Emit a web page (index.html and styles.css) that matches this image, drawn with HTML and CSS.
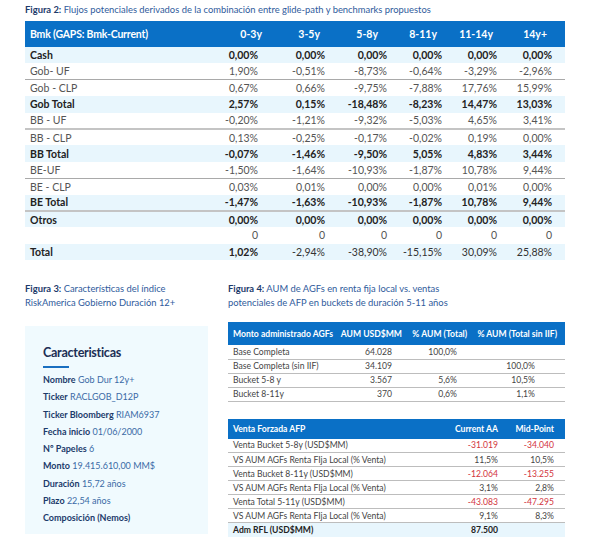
FILE: index.html
```html
<!DOCTYPE html>
<html lang="es">
<head>
<meta charset="utf-8">
<title>Figuras</title>
<link rel="stylesheet" href="styles.css">
</head>
<body>
<div class="page">
  <p class="caption fig2"><b>Figura 2:</b> Flujos potenciales derivados de la combinación entre glide-path y benchmarks propuestos</p>
  <table class="gaps">
    <colgroup>
      <col class="c-label"><col class="c1"><col class="c2"><col class="c3"><col class="c4"><col class="c5"><col class="c6">
    </colgroup>
    <thead>
      <tr><th>Bmk (GAPS: Bmk-Current)</th><th>0-3y</th><th>3-5y</th><th>5-8y</th><th>8-11y</th><th>11-14y</th><th>14y+</th></tr>
    </thead>
    <tbody>
      <tr class="hl bold"><td>Cash</td><td>0,00%</td><td>0,00%</td><td>0,00%</td><td>0,00%</td><td>0,00%</td><td>0,00%</td></tr>
      <tr class="line"><td>Gob- UF</td><td>1,90%</td><td>-0,51%</td><td>-8,73%</td><td>-0,64%</td><td>-3,29%</td><td>-2,96%</td></tr>
      <tr><td>Gob - CLP</td><td>0,67%</td><td>0,66%</td><td>-9,75%</td><td>-7,88%</td><td>17,76%</td><td>15,99%</td></tr>
      <tr class="hl bold"><td>Gob Total</td><td>2,57%</td><td>0,15%</td><td>-18,48%</td><td>-8,23%</td><td>14,47%</td><td>13,03%</td></tr>
      <tr class="thick"><td>BB - UF</td><td>-0,20%</td><td>-1,21%</td><td>-9,32%</td><td>-5,03%</td><td>4,65%</td><td>3,41%</td></tr>
      <tr><td>BB - CLP</td><td>0,13%</td><td>-0,25%</td><td>-0,17%</td><td>-0,02%</td><td>0,19%</td><td>0,00%</td></tr>
      <tr class="hl bold"><td>BB Total</td><td>-0,07%</td><td>-1,46%</td><td>-9,50%</td><td>5,05%</td><td>4,83%</td><td>3,44%</td></tr>
      <tr class="line"><td>BE-UF</td><td>-1,50%</td><td>-1,64%</td><td>-10,93%</td><td>-1,87%</td><td>10,78%</td><td>9,44%</td></tr>
      <tr><td>BE - CLP</td><td>0,03%</td><td>0,01%</td><td>0,00%</td><td>0,00%</td><td>0,01%</td><td>0,00%</td></tr>
      <tr class="hl bold thick"><td>BE Total</td><td>-1,47%</td><td>-1,63%</td><td>-10,93%</td><td>-1,87%</td><td>10,78%</td><td>9,44%</td></tr>
      <tr class="hl bold"><td>Otros</td><td>0,00%</td><td>0,00%</td><td>0,00%</td><td>0,00%</td><td>0,00%</td><td>0,00%</td></tr>
      <tr><td></td><td>0</td><td>0</td><td>0</td><td>0</td><td>0</td><td>0</td></tr>
      <tr class="hl total"><td>Total</td><td>1,02%</td><td>-2,94%</td><td>-38,90%</td><td>-15,15%</td><td>30,09%</td><td>25,88%</td></tr>
    </tbody>
  </table>

  <div class="lower">
    <section class="fig3">
      <p class="caption"><b>Figura 3:</b> Características del índice<br>RiskAmerica Gobierno Duración 12+</p>
      <div class="panel">
        <h2>Caracteristicas</h2>
        <ul class="facts">
          <li><b>Nombre</b> Gob Dur 12y+</li>
          <li><b>Ticker</b> RACLGOB_D12P</li>
          <li><b>Ticker Bloomberg</b> RIAM6937</li>
          <li><b>Fecha inicio</b> 01/06/2000</li>
          <li><b>Nº Papeles</b> 6</li>
          <li><b>Monto</b> 19.415.610,00 MM$</li>
          <li><b>Duración</b> 15,72 años</li>
          <li><b>Plazo</b> 22,54 años</li>
          <li><b>Composición (Nemos)</b></li>
        </ul>
      </div>
    </section>

    <section class="fig4">
      <p class="caption"><b>Figura 4:</b> AUM de AGFs en renta fija local vs. ventas<br>potenciales de AFP en buckets de duración 5-11 años</p>
      <table class="small aum">
        <colgroup><col class="a1"><col class="a2"><col class="a3"><col class="a4"></colgroup>
        <thead>
          <tr><th>Monto administrado AGFs</th><th>AUM USD$MM</th><th>% AUM (Total)</th><th>% AUM (Total sin IIF)</th></tr>
        </thead>
        <tbody>
          <tr><td>Base Completa</td><td>64.028</td><td>100,0%</td><td></td></tr>
          <tr><td>Base Completa (sin IIF)</td><td>34.109</td><td></td><td>100,0%</td></tr>
          <tr><td>Bucket 5-8 y</td><td>3.567</td><td>5,6%</td><td>10,5%</td></tr>
          <tr><td>Bucket 8-11y</td><td>370</td><td>0,6%</td><td>1,1%</td></tr>
        </tbody>
      </table>
      <table class="small venta">
        <colgroup><col class="v1"><col class="v2"><col class="v3"></colgroup>
        <thead>
          <tr><th>Venta Forzada AFP</th><th>Current AA</th><th>Mid-Point</th></tr>
        </thead>
        <tbody>
          <tr><td>Venta Bucket 5-8y (USD$MM)</td><td class="neg">-31.019</td><td class="neg">-34.040</td></tr>
          <tr><td>VS AUM AGFs Renta FIja Local (% Venta)</td><td>11,5%</td><td>10,5%</td></tr>
          <tr><td>Venta Bucket 8-11y (USD$MM)</td><td class="neg">-12.064</td><td class="neg">-13.255</td></tr>
          <tr><td>VS AUM AGFs Renta FIja Local (% Venta)</td><td>3,1%</td><td>2,8%</td></tr>
          <tr><td>Venta Total 5-11y (USD$MM)</td><td class="neg">-43.083</td><td class="neg">-47.295</td></tr>
          <tr><td>VS AUM AGFs Renta FIja Local (% Venta)</td><td>9,1%</td><td>8,3%</td></tr>
          <tr class="adm"><td>Adm RFL (USD$MM)</td><td>87.500</td><td></td></tr>
        </tbody>
      </table>
    </section>
  </div>
</div>
</body>
</html>
```

FILE: styles.css
```css
* { box-sizing: border-box; }
html, body { margin: 0; padding: 0; background: #fff; }
body {
  font-family: Lato, "Open Sans", "Liberation Sans", sans-serif;
  color: #444;
  width: 589px;
}
.page { padding: 3px 24px 0 25px; }

.caption {
  margin: 0;
  font-size: 9.4px;
  line-height: 14px;
  color: #2f5b9c;
}
.caption b { color: #1c3a6b; font-weight: 700; }
.fig2 { margin-bottom: 4px; }

/* main table */
.gaps {
  width: 540px;
  border-collapse: collapse;
  table-layout: fixed;
  font-size: 10.5px;
}
.gaps .c-label { width: 175px; }
.gaps .c1 { width: 66px; }
.gaps .c2 { width: 67px; }
.gaps .c3 { width: 62px; }
.gaps .c4 { width: 55px; }
.gaps .c5 { width: 55px; }
.gaps .c6 { width: 60px; }

.gaps th {
  background: #0a70c6;
  color: #fff;
  font-weight: 700;
  height: 26px;
  padding: 0;
  text-align: right;
  white-space: nowrap;
}
.gaps th:first-child { text-align: left; padding-left: 5px; letter-spacing: -0.2px; }
.gaps th:nth-child(2) { padding-right: 4px; }
.gaps th:nth-child(3) { padding-right: 13px; }
.gaps th:nth-child(4) { padding-right: 17px; }
.gaps th:nth-child(5) { padding-right: 13px; }
.gaps th:nth-child(6) { padding-right: 12px; }
.gaps th:nth-child(7) { padding-right: 18px; }

.gaps td {
  height: 16.4px;
  padding: 0 8px 0 0;
  text-align: right;
  white-space: nowrap;
  color: #555;
  line-height: 14px;
}
.gaps td:first-child { text-align: left; padding-left: 5px; }
.gaps td:last-child { padding-right: 13px; }
.gaps tr.hl td { background: #e8f6fd; }
.gaps tr.bold td { font-weight: 700; color: #222; }
.gaps tr.total td { color: #333; }
.gaps tr.total td:first-child,
.gaps tr.total td:nth-child(2) { font-weight: 700; color: #222; }
.gaps tr.line td { border-bottom: 1px solid #a9a9a9; }
.gaps tr.thick td { border-bottom: 2px solid #c4c4c4; }

/* lower section */
.lower {
  display: flex;
  gap: 20px;
  margin-top: 22px;
}
.fig3 { width: 183px; flex: none; }
.fig4 { width: 337px; flex: none; }

.panel {
  margin-top: 16px;
  background: #f0fafe;
  height: 208px;
  padding: 18px 0 0 18px;
}
.panel h2 {
  margin: 0;
  font-size: 12.6px;
  letter-spacing: -0.3px;
  line-height: 18px;
  font-weight: 700;
  color: #1c2f55;
}
.panel h2::after {
  content: "";
  display: block;
  width: 26px;
  height: 2px;
  background: #1a6fc0;
  margin-top: 4px;
}
.facts {
  list-style: none;
  margin: 3px 0 0;
  padding: 0;
  font-size: 9px;
  line-height: 17.25px;
  color: #3a6aa6;
}
.facts b { color: #1c3a6b; font-weight: 700; }

/* small tables */
.small {
  width: 337px;
  border-collapse: collapse;
  table-layout: fixed;
  font-size: 8.6px;
  color: #444;
}
.small th {
  background: #0a70c6;
  color: #fff;
  font-weight: 700;
  padding: 0;
  text-align: right;
  white-space: nowrap;
}
.small th:first-child, .small td:first-child { text-align: left; padding-left: 5px; }
.small td {
  padding: 0;
  height: 14px;
  line-height: 12px;
  text-align: right;
  white-space: nowrap;
  border-bottom: 1px solid #bdbdbd;
}

.aum { margin-top: 12px; }
.aum th { height: 23px; }
.aum .a1 { width: 112px; }
.aum .a2 { width: 65px; }
.aum .a3 { width: 67px; }
.aum .a4 { width: 93px; }
.aum th:nth-child(2) { padding-right: 3px; }
.aum th:nth-child(3) { padding-right: 5px; }
.aum th:nth-child(4) { padding-right: 8px; }
.aum td:nth-child(2) { padding-right: 13px; }
.aum td:nth-child(3) { padding-right: 15px; }
.aum td:nth-child(4) { padding-right: 30px; }

.venta { margin-top: 17px; }
.venta th { height: 20px; }
.venta .v1 { width: 212px; }
.venta .v2 { width: 65px; }
.venta .v3 { width: 60px; }
.venta th:nth-child(2), .venta td:nth-child(2) { padding-right: 7px; }
.venta th:nth-child(3), .venta td:nth-child(3) { padding-right: 11px; }
.venta td.neg { color: #d2343c; }
.venta tr.adm td { background: #e8f6fd; font-weight: 700; color: #222; border-bottom: none; }
```
